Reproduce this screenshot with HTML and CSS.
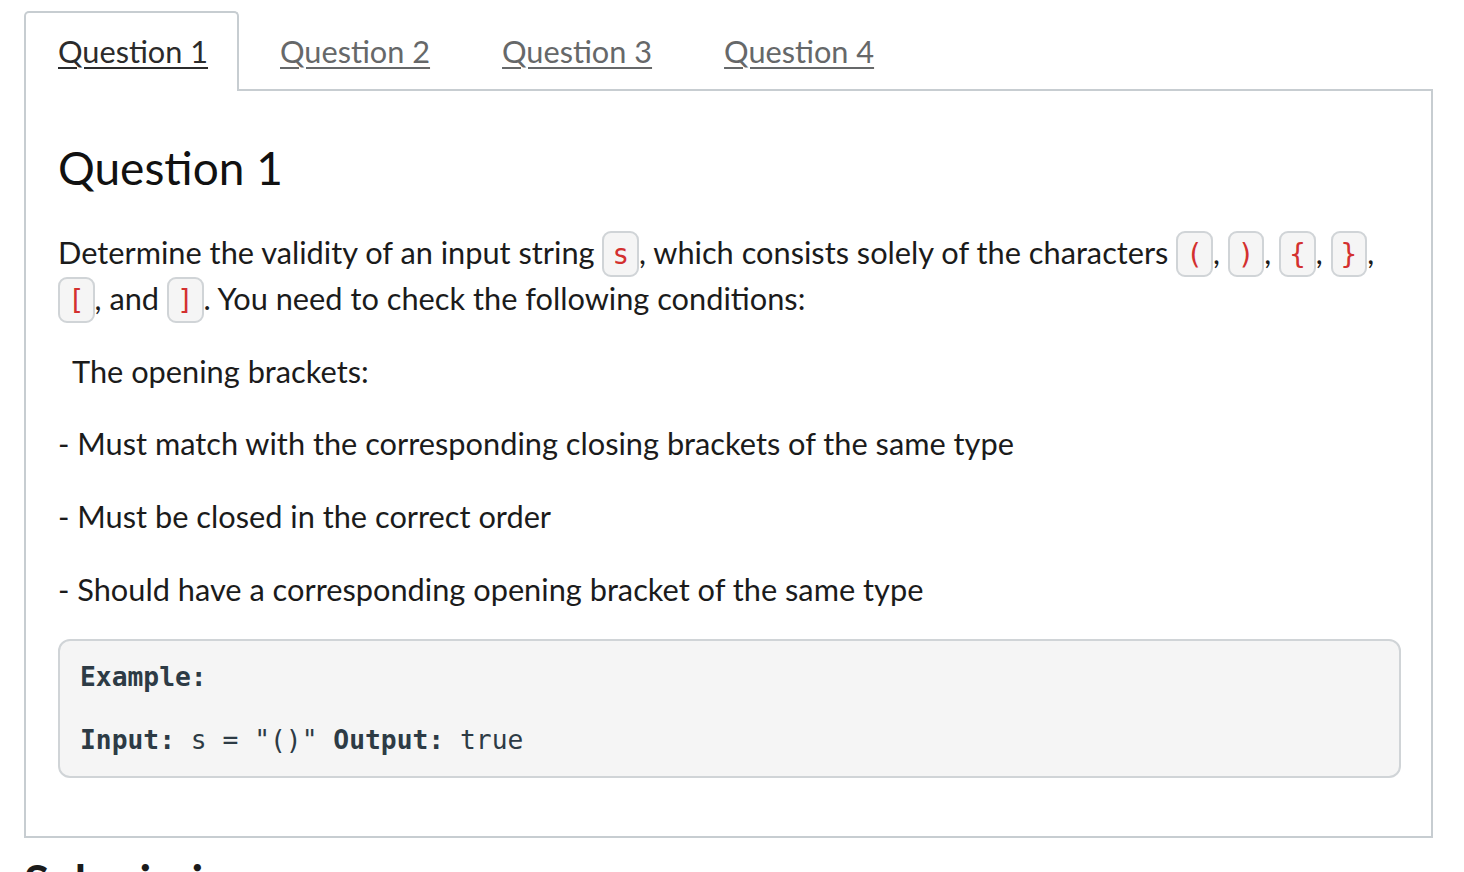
FILE: index.html
```html
<!DOCTYPE html>
<html lang="en">
<head>
<meta charset="utf-8">
<title>Question 1</title>
<link rel="stylesheet" href="styles.css">
</head>
<body>
<div class="page">
  <div class="tabs">
    <a class="tab active" href="#q1">Question 1</a>
    <a class="tab" href="#q2">Question 2</a>
    <a class="tab" href="#q3">Question 3</a>
    <a class="tab" href="#q4">Question 4</a>
  </div>
  <div class="panel">
    <h2 class="title">Question 1</h2>
    <p class="text">Determine the validity of an input string <code class="ic">s</code>, which consists solely of the characters <code class="ic">(</code>, <code class="ic">)</code>, <code class="ic">{</code>, <code class="ic">}</code>, <code class="ic">[</code>, and <code class="ic">]</code>. You need to check the following conditions:</p>
    <p class="text indent">The opening brackets:</p>
    <p class="text">- Must match with the corresponding closing brackets of the same type</p>
    <p class="text">- Must be closed in the correct order</p>
    <p class="text">- Should have a corresponding opening bracket of the same type</p>
    <pre class="example"><b>Example:</b>

<b>Input:</b> s = "()" <b>Output:</b> true</pre>
  </div>
  <h2 class="section">Submission</h2>
</div>
</body>
</html>
```
FILE: styles.css
```css
html, body {
  margin: 0;
  padding: 0;
  background: #fff;
}
body {
  font-family: Lato, "Noto Sans", sans-serif;
  color: #1b1b1b;
}
.page {
  padding: 11px 31px 0 24px;
}
.tabs {
  display: flex;
  gap: 7px;
  position: relative;
  z-index: 1;
}
.tab {
  display: block;
  font-size: 30.7px;
  line-height: 36px;
  padding: 21px 29px 19px 32px;
  color: #666869;
  text-decoration: underline;
  text-decoration-thickness: 2px;
  text-underline-offset: 4px;
  border: 2px solid transparent;
  border-bottom: none;
  border-radius: 5px 5px 0 0;
  margin-bottom: -2px;
  background: transparent;
}
.tab.active {
  color: #2b2b2b;
  border-color: #c7cdd1;
  background: #fff;
  padding-bottom: 21px;
}
.panel {
  border: 2px solid #c7cdd1;
  padding: 48px 30px 58px 32px;
}
.title {
  font-size: 46px;
  font-weight: 400;
  line-height: 58px;
  margin: 0 0 33px;
  color: #111;
}
.text {
  font-size: 30.75px;
  line-height: 46px;
  margin: 0 0 26.7px;
}
.indent {
  padding-left: 14px;
}
.ic {
  font-family: "DejaVu Sans Mono", monospace;
  font-size: 27.5px;
  line-height: 1;
  color: #d3302f;
  background: #f5f5f5;
  border: 2px solid #d0d4d7;
  border-radius: 9px;
  padding: 5px 8px;
}
.example {
  margin: 24px 0 0;
  background: #f5f5f5;
  border: 2px solid #d0d4d7;
  border-radius: 12px;
  padding: 21px 20px 19px;
  font-family: "DejaVu Sans Mono", monospace;
  font-size: 26.3px;
  line-height: 31.5px;
  color: #2d3b45;
  white-space: pre-wrap;
}
.example b {
  font-weight: 700;
}
.section {
  font-size: 46px;
  font-weight: 700;
  margin: 14px 0 0;
  line-height: 58px;
}
```
